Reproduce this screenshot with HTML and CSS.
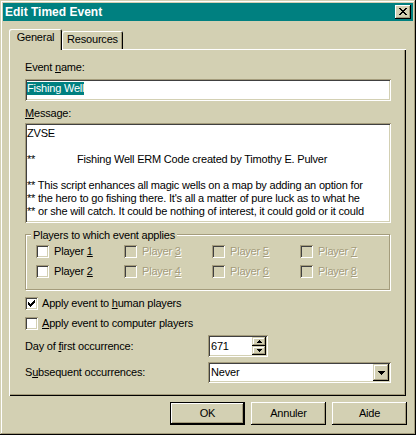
FILE: index.html
```html
<!DOCTYPE html>
<html>
<head>
<meta charset="utf-8">
<title>Edit Timed Event</title>
<link rel="stylesheet" href="styles.css">
</head>
<body>
<div class="window">
  <div class="titlebar">
    <span class="title">Edit Timed Event</span>
    <div class="capbtn">
      <svg width="8" height="7" viewBox="0 0 8 7" shape-rendering="crispEdges"><path d="M0 0h2v1H0zM6 0h2v1H6zM1 1h2v1H1zM5 1h2v1H5zM2 2h4v1H2zM3 3h2v1H3zM2 4h4v1H2zM1 5h2v1H1zM5 5h2v1H5zM0 6h2v1H0zM6 6h2v1H6z" fill="#000"/></svg>
    </div>
  </div>
  <div class="client">
    <div class="tabs">
      <div class="tab active">General</div>
      <div class="tab">Resources</div>
    </div>
    <div class="panel">
      <div class="lbl">Event <u>n</u>ame:</div>
      <div class="edit name"><span class="sel">Fishing Well</span></div>
      <div class="lbl msg-lbl"><u>M</u>essage:</div>
      <div class="edit memo">
        <div class="line">ZVSE</div>
        <div class="line"></div>
        <div class="line"><span class="tabstop">**</span>Fishing Well ERM Code created by Timothy E. Pulver</div>
        <div class="line"></div>
        <div class="line">** This script enhances all magic wells on a map by adding an option for</div>
        <div class="line">** the hero to go fishing there. It's all a matter of pure luck as to what he</div>
        <div class="line">** or she will catch. It could be nothing of interest, it could gold or it could</div>
      </div>
      <div class="group">
        <div class="legend">Players to which event applies</div>
        <div class="players">
          <div class="cb"><span class="box"></span><span>Player <u>1</u></span></div>
          <div class="cb"><span class="box"></span><span>Player <u>2</u></span></div>
          <div class="cb dis"><span class="box"></span><span>Player <u>3</u></span></div>
          <div class="cb dis"><span class="box"></span><span>Player <u>4</u></span></div>
          <div class="cb dis"><span class="box"></span><span>Player <u>5</u></span></div>
          <div class="cb dis"><span class="box"></span><span>Player <u>6</u></span></div>
          <div class="cb dis"><span class="box"></span><span>Player <u>7</u></span></div>
          <div class="cb dis"><span class="box"></span><span>Player <u>8</u></span></div>
        </div>
      </div>
      <div class="cb apply first"><span class="box"><svg width="7" height="7" viewBox="0 0 7 7" shape-rendering="crispEdges"><path d="M6 0h1v1H6zM5 1h2v1H5zM0 2h1v1H0zM4 2h3v1H4zM0 3h2v1H0zM3 3h3v1H3zM0 4h5v1H0zM1 5h3v1H1zM2 6h1v1H2z" fill="#000"/></svg></span><span>Apply event to <u>h</u>uman players</span></div>
      <div class="cb apply"><span class="box"></span><span><u>A</u>pply event to computer players</span></div>
      <div class="field first">
        <span class="flabel">Day of <u>f</u>irst occurrence:</span>
        <div class="spin">
          <span class="val">671</span>
          <div class="spinbtns">
            <div class="sbtn"><svg width="5" height="3" viewBox="0 0 5 3" shape-rendering="crispEdges"><path d="M2 0h1v1H2zM1 1h3v1H1zM0 2h5v1H0z" fill="#000"/></svg></div>
            <div class="sbtn"><svg width="5" height="3" viewBox="0 0 5 3" shape-rendering="crispEdges"><path d="M0 0h5v1H0zM1 1h3v1H1zM2 2h1v1H2z" fill="#000"/></svg></div>
          </div>
        </div>
      </div>
      <div class="field">
        <span class="flabel">S<u>u</u>bsequent occurrences:</span>
        <div class="combo">
          <span class="val">Never</span>
          <div class="dropbtn"><svg width="7" height="4" viewBox="0 0 7 4" shape-rendering="crispEdges"><path d="M0 0h7v1H0zM1 1h5v1H1zM2 2h3v1H2zM3 3h1v1H3z" fill="#000"/></svg></div>
        </div>
      </div>
    </div>
    <div class="btnrow">
      <div class="btn default">OK</div>
      <div class="btn">Annuler</div>
      <div class="btn">Aide</div>
    </div>
  </div>
</div>
</body>
</html>
```

FILE: styles.css
```css
:root {
  --face: #d3d0b3;
  --light: #d3d0b3;
  --shadow: #a49c7c;
  --dark: #404040;
  --teal: #008080;
}

* { box-sizing: border-box; margin: 0; padding: 0; }

html, body {
  width: 416px;
  height: 435px;
  overflow: hidden;
  background: var(--face);
}

body {
  font-family: "Liberation Sans", Arial, sans-serif;
  font-size: 11px;
  line-height: 13px;
  letter-spacing: -0.2px;
  color: #000;
}

u { text-decoration: underline; text-underline-offset: 1px; }

.window {
  width: 416px;
  height: 435px;
  padding: 3px;
  background: var(--face);
  box-shadow: inset -1px -1px #000, inset 1px 1px var(--light), inset -2px -2px var(--shadow), inset 2px 2px #fff;
  display: flex;
  flex-direction: column;
}

.titlebar {
  height: 18px;
  background: var(--teal);
  display: flex;
  align-items: center;
  justify-content: space-between;
  padding: 0 2px;
}

.title {
  color: #fff;
  font-weight: bold;
  font-size: 12px;
  line-height: 18px;
  letter-spacing: 0;
}

.capbtn {
  width: 16px;
  height: 14px;
  padding: 3px 0 0 4px;
  background: var(--face);
  box-shadow: inset -1px -1px #000, inset 1px 1px #fff, inset -2px -2px var(--shadow), inset 2px 2px var(--light);
}
.capbtn svg { display: block; }

.client {
  display: flex;
  flex-direction: column;
  padding: 0 7px 0 6px;
}

.tabs {
  display: flex;
  align-items: flex-end;
  height: 20px;
  margin-top: 8px;
}

.tab {
  height: 18px;
  padding-top: 2px;
  text-align: center;
  background: var(--face);
  box-shadow: inset 1px 1px #fff, inset -1px 0 #000, inset -2px 0 var(--shadow);
  border-top-left-radius: 2px;
  border-top-right-radius: 2px;
}
.tab.active {
  width: 53px;
  height: 21px;
  margin-bottom: -1px;
  position: relative;
  z-index: 1;
}
.tab:not(.active) { width: 61px; }

.panel {
  height: 347px;
  padding: 12px 15px 0 16px;
  background: var(--face);
  box-shadow: inset 1px 1px #fff, inset -1px -1px #000, inset -2px -2px var(--shadow);
  display: flex;
  flex-direction: column;
}

.lbl { height: 13px; }
.msg-lbl { margin-top: 6px; }

.edit {
  background: #fff;
  box-shadow: inset 1px 1px var(--shadow), inset -1px -1px #fff, inset 2px 2px var(--dark), inset -2px -2px var(--light);
}
.edit.name {
  margin-top: 5px;
  height: 22px;
  padding: 3px 2px 0;
}
.sel {
  display: inline-block;
  background: var(--teal);
  color: #fff;
  height: 13px;
}

.edit.memo {
  margin-top: 3px;
  height: 100px;
  padding: 4px 2px 0;
  overflow: hidden;
}
.line { height: 13px; white-space: nowrap; }
.tabstop { display: inline-block; width: 50px; }

.group {
  margin-top: 11px;
  margin-right: 1px;
  height: 56px;
  border: 1px solid var(--shadow);
  box-shadow: inset 1px 1px #fff, 1px 1px #fff;
  padding-left: 10px;
}
.legend {
  width: fit-content;
  margin: -6px 0 0 -5px;
  padding: 0 2px;
  background: var(--face);
  height: 13px;
}
.players {
  margin-top: 3px;
  display: grid;
  grid-template-columns: repeat(4, 88px);
  grid-template-rows: 13px 13px;
  grid-auto-flow: column;
  row-gap: 7px;
}

.cb {
  display: flex;
  align-items: center;
  height: 13px;
  gap: 5px;
  white-space: nowrap;
}
.box {
  flex: none;
  width: 13px;
  height: 13px;
  padding: 3px;
  background: #fff;
  box-shadow: inset 1px 1px var(--shadow), inset -1px -1px #fff, inset 2px 2px var(--dark), inset -2px -2px var(--light);
}
.box svg { display: block; }
.cb.dis { color: var(--shadow); text-shadow: 1px 1px #fff; }
.cb.dis .box { background: var(--face); }

.cb.apply { gap: 4px; margin-top: 7px; }

.field {
  display: flex;
  align-items: center;
  margin-top: 5px;
}
.flabel { width: 183px; flex: none; }

.spin {
  width: 60px;
  height: 22px;
  display: flex;
  align-items: center;
  padding: 2px;
  background: #fff;
  box-shadow: inset 1px 1px var(--shadow), inset -1px -1px #fff, inset 2px 2px var(--dark), inset -2px -2px var(--light);
}
.spin .val { flex: 1; padding-left: 1px; }
.spinbtns {
  width: 14px;
  height: 18px;
  display: flex;
  flex-direction: column;
}
.sbtn {
  height: 9px;
  display: flex;
  align-items: center;
  justify-content: center;
  background: var(--face);
  box-shadow: inset -1px -1px #000, inset 1px 1px var(--light), inset -2px -2px var(--shadow), inset 2px 2px #fff;
}
.sbtn svg { display: block; }

.combo {
  width: 184px;
  height: 21px;
  display: flex;
  align-items: center;
  padding: 2px;
  background: #fff;
  box-shadow: inset 1px 1px var(--shadow), inset -1px -1px #fff, inset 2px 2px var(--dark), inset -2px -2px var(--light);
}
.combo .val { flex: 1; padding-left: 1px; }
.dropbtn {
  width: 16px;
  height: 17px;
  display: flex;
  align-items: center;
  justify-content: center;
  background: var(--face);
  box-shadow: inset -1px -1px #000, inset 1px 1px var(--light), inset -2px -2px var(--shadow), inset 2px 2px #fff;
}
.dropbtn svg { display: block; }

.btnrow {
  display: flex;
  justify-content: flex-end;
  gap: 6px;
  margin-top: 6px;
  padding-right: 6px;
  margin-right: -7px;
}
.btn {
  width: 75px;
  height: 23px;
  display: flex;
  align-items: center;
  justify-content: center;
  background: var(--face);
  box-shadow: inset -1px -1px #000, inset 1px 1px #fff, inset -2px -2px var(--shadow), inset 2px 2px var(--light);
}
.btn.default {
  box-shadow: inset 0 0 0 1px #000, inset -2px -2px #000, inset 2px 2px #fff, inset -3px -3px var(--shadow);
}
```
